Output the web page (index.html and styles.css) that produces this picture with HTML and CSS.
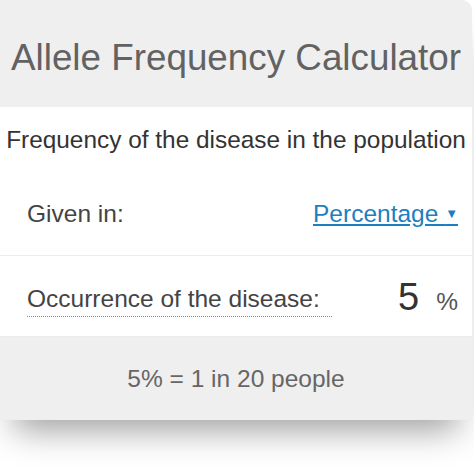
FILE: index.html
```html
<!DOCTYPE html>
<html>
<head>
<meta charset="utf-8">
<link rel="stylesheet" href="styles.css">
</head>
<body>
<div class="card">
  <div class="header">Allele Frequency Calculator</div>
  <div class="section">
    <div class="section-title">Frequency of the disease in the population</div>
    <div class="row first-row">
      <span class="label">Given in:</span>
      <span class="select">Percentage <span class="caret">▼</span></span>
    </div>
  </div>
  <div class="section second">
    <div class="row">
      <span class="label dotted">Occurrence of the disease:</span>
      <span class="value"><span class="num">5</span><span class="unit">%</span></span>
    </div>
  </div>
  <div class="footer">5% = 1 in 20 people</div>
</div>
</body>
</html>
```
FILE: styles.css
```css
html, body {
  margin: 0;
  padding: 0;
  background: #fff;
}
body {
  font-family: "Liberation Sans", Arial, sans-serif;
  width: 474px;
  height: 474px;
  overflow: hidden;
}
.card {
  width: 472px;
  border-radius: 0 10px 0 0;
  background: #fff;
  box-shadow: 0 24px 32px -14px rgba(0,0,0,0.38);
}
.header {
  background: #efefef;
  color: #626262;
  font-size: 36.8px;
  height: 107px;
  box-sizing: border-box;
  padding-top: 8px;
  display: flex;
  align-items: center;
  justify-content: center;
  border-radius: 0 10px 0 0;
  white-space: nowrap;
}
.section {
  background: #fff;
  border-bottom: 1px solid #ececec;
}
.section-title {
  color: #333;
  font-size: 24.4px;
  line-height: 28px;
  text-align: center;
  padding-top: 19px;
  white-space: nowrap;
}
.row {
  display: flex;
  justify-content: space-between;
  align-items: center;
  padding: 0 14px 0 27px;
}
.first-row {
  height: 101px;
  box-sizing: border-box;
  padding-top: 18px;
}
.label {
  color: #444;
  font-size: 24.5px;
}
.select {
  color: #1d7fbf;
  font-size: 24.5px;
  text-decoration: underline;
}
.caret {
  font-size: 13px;
  vertical-align: 4px;
}
.second .row {
  height: 80px;
  padding-top: 2px;
  box-sizing: border-box;
}
.dotted {
  border-bottom: 1px dotted #888;
  padding-bottom: 3px;
  padding-right: 12px;
  margin-top: 7px;
}
.value {
  display: flex;
  align-items: baseline;
  gap: 17px;
  color: #333;
}
.num {
  font-size: 38px;
}
.unit {
  font-size: 24.5px;
  color: #555;
}
.footer {
  background: #efefef;
  color: #666;
  font-size: 24.5px;
  height: 83px;
  display: flex;
  align-items: center;
  justify-content: center;
}
```
